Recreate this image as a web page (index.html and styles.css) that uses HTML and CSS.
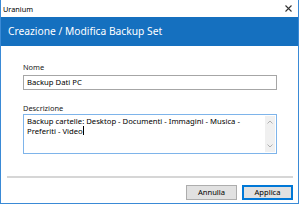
FILE: index.html
```html
<!DOCTYPE html>
<html>
<head>
<meta charset="utf-8">
<link rel="stylesheet" href="styles.css">
</head>
<body>
<div class="window">
  <div class="titlebar">
    <span class="app-name">Uranium</span>
    <svg class="close" width="7" height="7" viewBox="0 0 7 7"><path d="M0.5 0.5L6.5 6.5M6.5 0.5L0.5 6.5" stroke="#333" stroke-width="1.1"/></svg>
  </div>
  <div class="header">Creazione / Modifica Backup Set</div>
  <div class="content">
    <div class="label">Nome</div>
    <div class="field">Backup Dati PC</div>
    <div class="label label-desc">Descrizione</div>
    <div class="textarea">
      <div class="ta-text">Backup cartelle: Desktop - Documenti - Immagini - Musica - Preferiti - Video<span class="caret"></span></div>
      <div class="scrollbar">
        <svg width="6" height="4" viewBox="0 0 6 4"><path d="M0.5 3.5L3 1L5.5 3.5" fill="none" stroke="#b0b0b0" stroke-width="1"/></svg>
        <svg width="6" height="4" viewBox="0 0 6 4"><path d="M0.5 0.5L3 3L5.5 0.5" fill="none" stroke="#b0b0b0" stroke-width="1"/></svg>
      </div>
    </div>
  </div>
  <div class="separator"></div>
  <div class="buttons">
    <div class="btn">Annulla</div>
    <div class="btn btn-primary">Applica</div>
  </div>
</div>
</body>
</html>
```
FILE: styles.css
```css
html, body {
  margin: 0;
  padding: 0;
  background: #ffffff;
}
body {
  width: 300px;
  height: 205px;
  overflow: hidden;
  font-family: "Noto Sans", "Open Sans", sans-serif;
}
.window {
  box-sizing: border-box;
  width: 299px;
  height: 204px;
  border-left: 1px solid #3a8ad6;
  border-right: 1px solid #3a8ad6;
  border-bottom: 1px solid #3a8ad6;
  display: flex;
  flex-direction: column;
  background: #ffffff;
}
.titlebar {
  height: 17px;
  display: flex;
  align-items: center;
  justify-content: space-between;
  padding: 0 6px 0 2px;
}
.app-name {
  font-size: 7.3px;
  color: #000;
  line-height: 10px;
}
.header {
  height: 29px;
  background: #1570bf;
  color: #fff;
  font-size: 10.25px;
  line-height: 29px;
  padding-left: 7px;
}
.content {
  padding: 16px 21px 0 22px;
  display: flex;
  flex-direction: column;
}
.label {
  font-size: 7.4px;
  line-height: 10px;
  color: #1a1a1a;
  height: 10px;
  margin-bottom: 3px;
}
.label-desc {
  margin-top: 13px;
  margin-bottom: 1px;
}
.field {
  box-sizing: border-box;
  height: 15px;
  border: 1px solid #a6a6a6;
  font-size: 7.7px;
  line-height: 13px;
  padding-left: 3px;
  color: #000;
}
.textarea {
  box-sizing: border-box;
  height: 40px;
  border: 1px solid #7eb4ea;
  display: flex;
  padding: 1px;
}
.ta-text {
  flex: 1;
  font-size: 7.7px;
  line-height: 10px;
  padding: 0 2px;
  color: #000;
}
.caret {
  display: inline-block;
  width: 1px;
  height: 9px;
  background: #000;
  vertical-align: -1px;
}
.scrollbar {
  width: 10px;
  background: #f0f0f0;
  display: flex;
  flex-direction: column;
  justify-content: space-between;
  align-items: center;
  padding: 4px 0;
}
.separator {
  height: 2px;
  background: #d6d6d6;
  margin: 22px 5px 0 6px;
}
.buttons {
  display: flex;
  justify-content: flex-end;
  gap: 5px;
  padding: 7px 5px 0 0;
}
.btn {
  box-sizing: border-box;
  width: 51px;
  height: 15px;
  background: #e1e1e1;
  border: 1px solid #adadad;
  font-size: 7.6px;
  line-height: 13px;
  text-align: center;
  color: #000;
}
.btn-primary {
  border: 1px solid #0078d7;
  box-shadow: inset 0 0 0 1px #0078d7;
}
```
